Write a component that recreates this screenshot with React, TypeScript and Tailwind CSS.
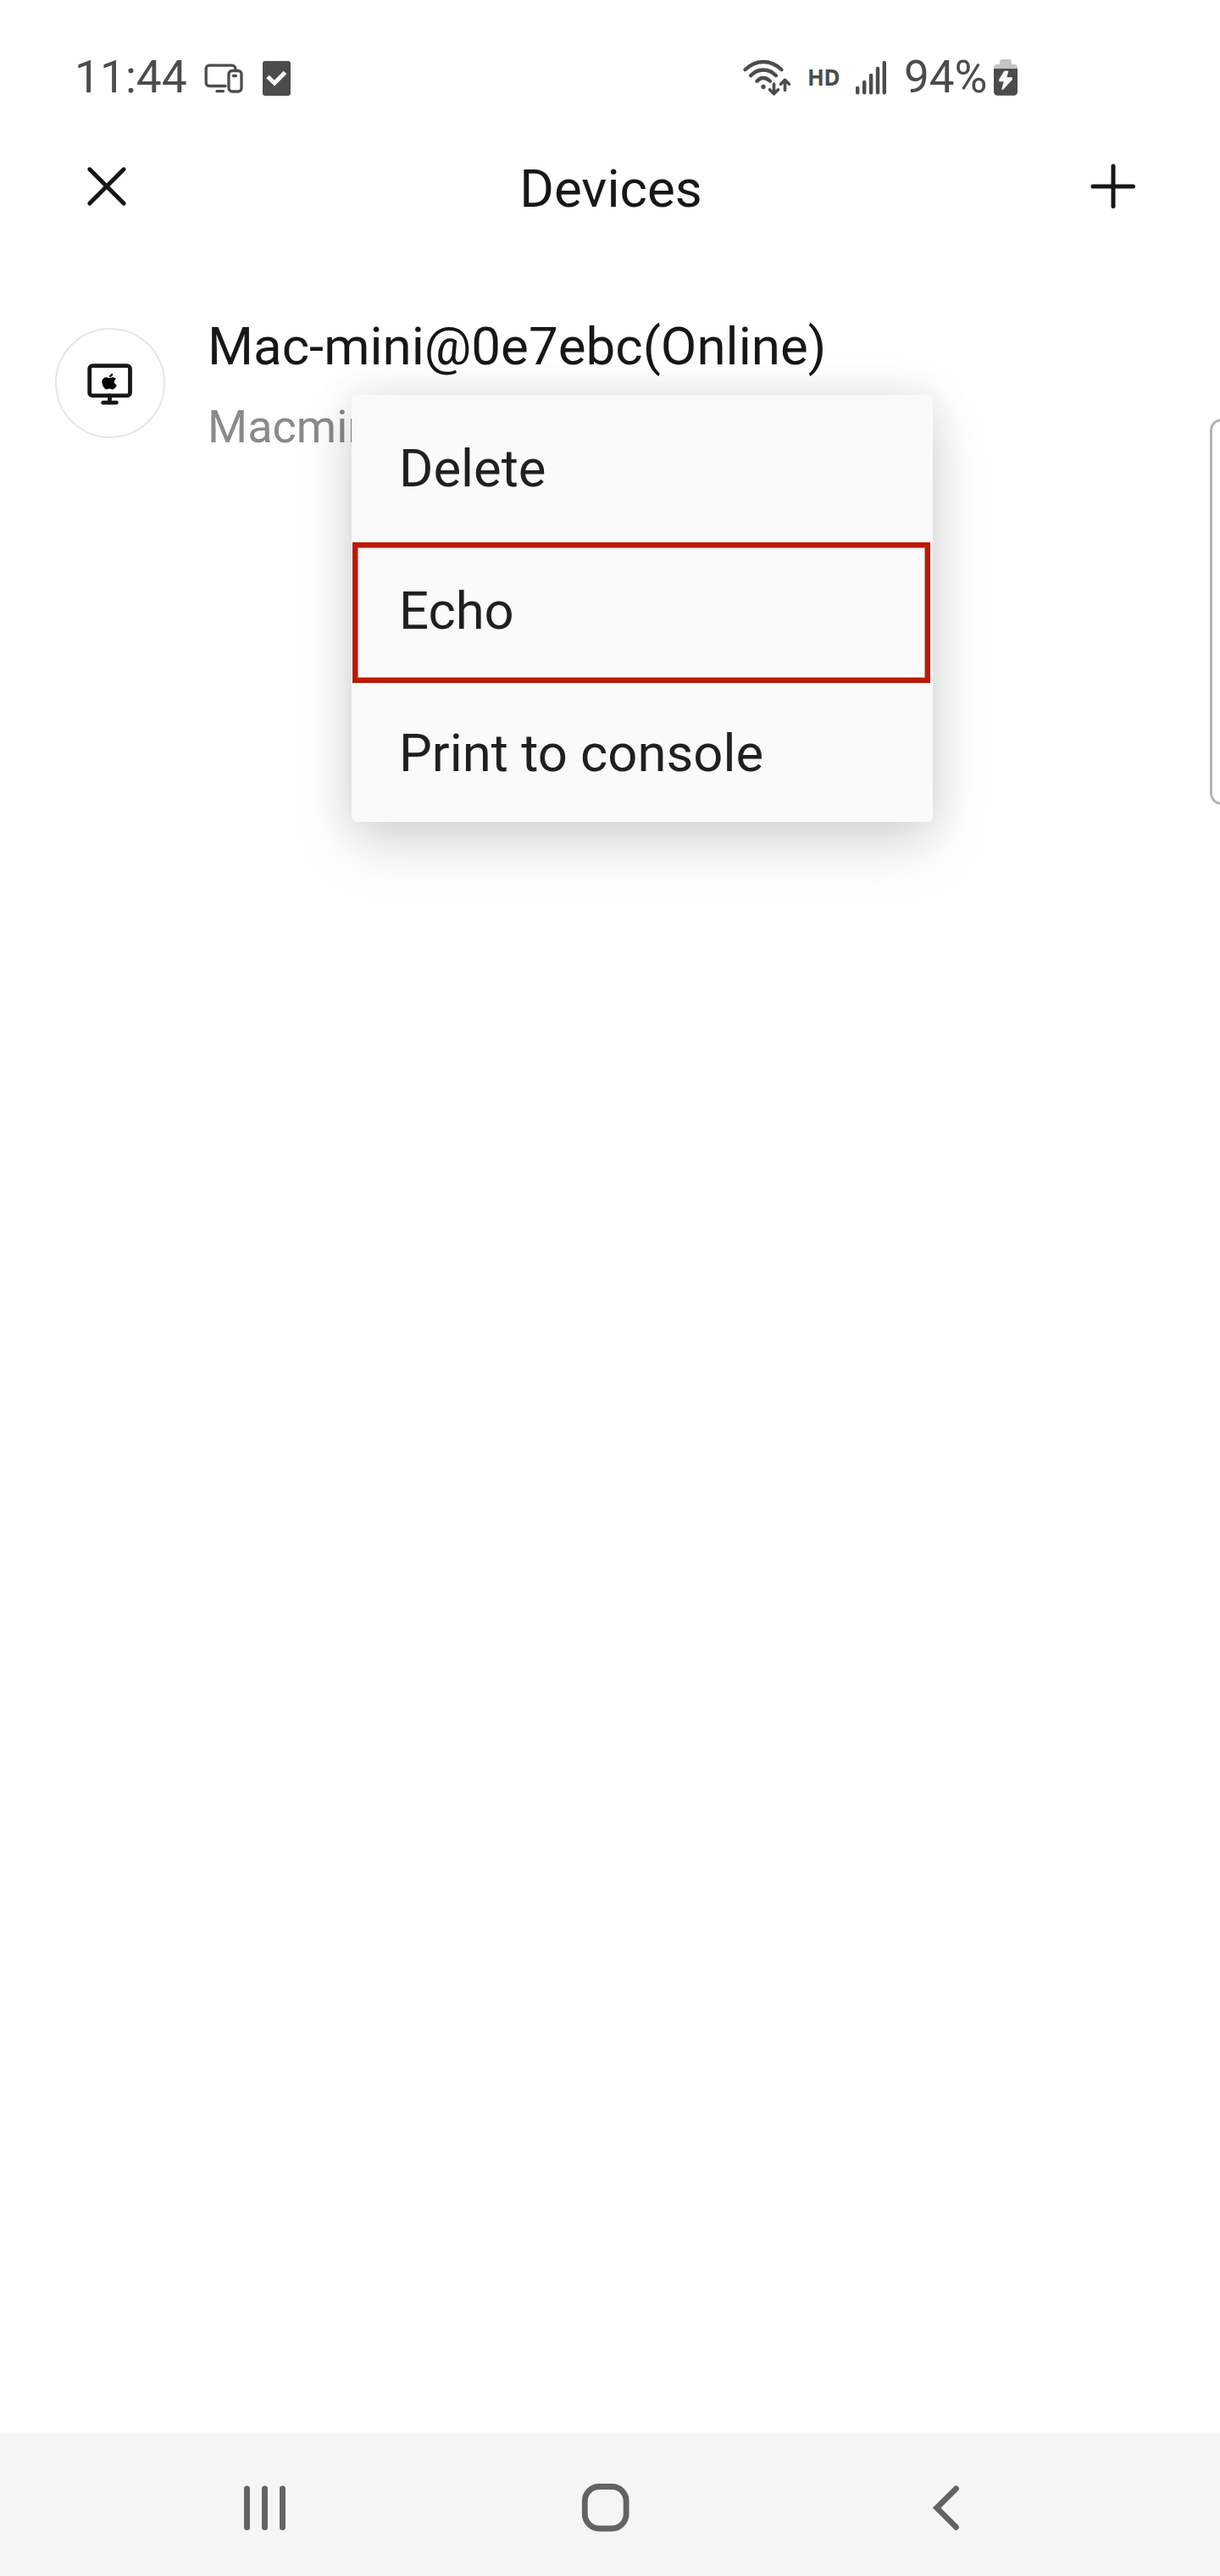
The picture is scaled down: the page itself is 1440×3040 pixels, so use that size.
import type { ReactNode } from "react";
import { FaApple } from "react-icons/fa";

function StatusBar() {
  return (
    <div className="flex h-[184px] shrink-0 items-start pt-[59px] text-[#4c4c4c]">
      <span className="ml-[88px] w-[152px] text-[53.300px] leading-[64px]">11:44</span>
      <svg className="mt-[11px] h-[44px] w-[48px]" viewBox="240 70 48 44" fill="none" stroke="currentColor" strokeWidth="3.300" strokeLinecap="round" strokeLinejoin="round">
        <path d="M266 101.500H247a3.800 3.800 0 0 1-3.800-3.800V81a3.800 3.800 0 0 1 3.800-3.800h27a3.800 3.800 0 0 1 3.800 3.800v1.500" />
        <rect x="270" y="83.500" width="15" height="24.500" rx="4" />
        <path d="M275.500 89.500h3M256 107.700h7.500" />
      </svg>
      <svg className="ml-[20px] mt-[11px] h-[44px] w-[38px]" viewBox="308 70 38 44" fill="none">
        <rect x="310" y="72" width="33" height="41" rx="3" fill="currentColor" />
        <path d="M316 90.500l8 7.500 12.500-12.500" stroke="white" strokeWidth="5" />
      </svg>
      <svg className="ml-[528px] mt-[9px] h-[48px] w-[62px]" viewBox="874 68 62 48" fill="none" stroke="currentColor" strokeWidth="4.300" strokeLinecap="round" strokeLinejoin="round">
        <path d="M879.500 82.200Q889 73 901 73t21.500 9.200M886 89.300q6.500-6.800 15-6.800t15 6.800M893.500 95.800q3.500-3.800 7.500-3.800t8 3.800" />
        <circle cx="901" cy="102.500" r="2.700" fill="currentColor" stroke="none" />
        <path strokeWidth="3.600" d="M913.500 99v11M908.500 105.800l5 5 5-5M926.500 106.500V95.500M921.500 99.300l5-5 5 5" />
      </svg>
      <span className="ml-[17px] mt-[15px] w-[55px] font-['Noto_Sans',sans-serif] text-[26px] font-bold leading-[34px] tracking-[-0.5px]">HD</span>
      <svg className="mt-[11px] h-[44px] w-[40px]" viewBox="1008 70 40 44" stroke="currentColor" strokeWidth="4.400" strokeLinecap="round">
        <path d="M1012.200 104v5.200M1020.200 97v12.200M1028.100 89v20.200M1036 81v28.200M1043.800 74v35.200" />
      </svg>
      <span className="ml-[19px] w-[104px] text-[53px] leading-[64px]">94%</span>
      <svg className="mt-[9px] h-[48px] w-[34px]" viewBox="1171 68 34 48">
        <path d="M1173 82v-2a4 4 0 0 1 4-4h3v-3a3 3 0 0 1 3-3h8a3 3 0 0 1 3 3v3h3a4 4 0 0 1 4 4v2z" fill="#c4c4c4" />
        <path d="M1173 81h28v27.500a4.200 4.200 0 0 1-4.200 4.200h-19.600a4.200 4.200 0 0 1-4.200-4.200z" fill="currentColor" />
        <path d="M1185.500 84h4.500l-2 7.500h6.500v2.500l-10.500 11.500h-1.500l2.500-9.500h-5.500v-2.500z" fill="white" stroke="white" strokeWidth=".6" strokeLinejoin="round" />
      </svg>
    </div>
  );
}

function Header() {
  return (
    <header className="flex h-[80px] shrink-0 items-start justify-between pl-[102px] pr-[98px] text-[#171717]">
      <svg className="mt-[12px] h-[48px] w-[48px]" viewBox="102 196 48 48" stroke="currentColor" strokeWidth="5" strokeLinecap="round">
        <path d="M105.800 199.800l40.300 40.300M146.100 199.800l-40.300 40.300" />
      </svg>
      <h1 className="ml-[6px] text-[62px] leading-[78px]">Devices</h1>
      <svg className="mt-[8px] h-[56px] w-[56px]" viewBox="1286 192 56 56" stroke="currentColor" strokeWidth="5" strokeLinecap="round">
        <path d="M1290 220h47.500M1314 196v47.500" />
      </svg>
    </header>
  );
}

function DeviceRow() {
  return (
    <div className="mt-[103px] flex pl-[65px]">
      <div className="mt-[20px] h-[130px] w-[130px] shrink-0 rounded-full border-2 border-[#e6e6e6]">
        <svg className="h-[126px] w-[126px]" viewBox="67 389 126 126" fill="none" stroke="#171717" strokeWidth="4.800" strokeLinecap="round">
          <rect x="105.700" y="431.700" width="47.800" height="35.200" rx="3.500" />
          <path d="M129.500 467v8" />
          <path d="M121.700 475.200h15.600" />
          <g transform="translate(117.200 439.300) scale(1.100 1)">
            <FaApple size={21.5} color="black" stroke="none" />
          </g>
        </svg>
      </div>
      <div className="ml-[50px]">
        <div className="text-[61.900px] leading-[84px] text-[#171717]">Mac-mini@0e7ebc(Online)</div>
        <div className="mt-[16px] text-[54px] leading-[74px] text-[#8a8a8a]">Macmini</div>
      </div>
    </div>
  );
}

function MenuItem({ children }: { children: ReactNode }) {
  return (
    <div className="flex h-[168px] items-center pl-[56px] pt-[7px] text-[61.600px] leading-none text-[#202020]">
      {children}
    </div>
  );
}

function ContextMenu() {
  return (
    <div className="absolute left-[415px] top-[466px] h-[504px] w-[686px] rounded-[6px] bg-[#fafafa] shadow-[0_30px_70px_rgba(0,0,0,0.13),0_0_50px_rgba(0,0,0,0.10)]">
      <MenuItem>Delete</MenuItem>
      <MenuItem>Echo</MenuItem>
      <MenuItem>Print to console</MenuItem>
      <div className="absolute left-px top-[174px] h-[166px] w-[682px] border-[6px] border-[#bb1a07] shadow-[inset_0_0_0_1px_#dc8d84]" />
    </div>
  );
}

function NavigationBar() {
  return (
    <nav className="mt-auto flex h-[168px] shrink-0 items-center bg-[#f5f5f5] pl-[284px] text-[#636363]">
      <svg className="mt-[8px] h-[60px] w-[56px]" viewBox="284 2930 56 60" stroke="currentColor" strokeWidth="7" strokeLinecap="round">
        <path d="M291.500 2937v45.500M312.500 2937v45.500M333.500 2937v45.500" />
      </svg>
      <svg className="ml-[344px] mt-[8px] h-[60px] w-[60px]" viewBox="684 2930 60 60" fill="none" stroke="currentColor" strokeWidth="6.800">
        <rect x="690.300" y="2934.500" width="48.800" height="49.500" rx="17" />
      </svg>
      <svg className="ml-[354px] mt-[8px] h-[60px] w-[40px]" viewBox="1098 2930 40 60" fill="none" stroke="currentColor" strokeWidth="6.800" strokeLinecap="round">
        <path d="M1128.500 2936.800l-22.800 22.800 22.800 22.800" />
      </svg>
    </nav>
  );
}

export default function App() {
  return (
    <div className="relative flex h-[3040px] w-[1440px] flex-col overflow-hidden bg-white font-[Roboto,sans-serif]">
      <StatusBar />
      <Header />
      <DeviceRow />
      <div className="absolute left-[1428px] top-[494px] h-[456px] w-[30px] rounded-[14px] border-[3px] border-[#b4b4b4]" />
      <ContextMenu />
      <NavigationBar />
    </div>
  );
}
